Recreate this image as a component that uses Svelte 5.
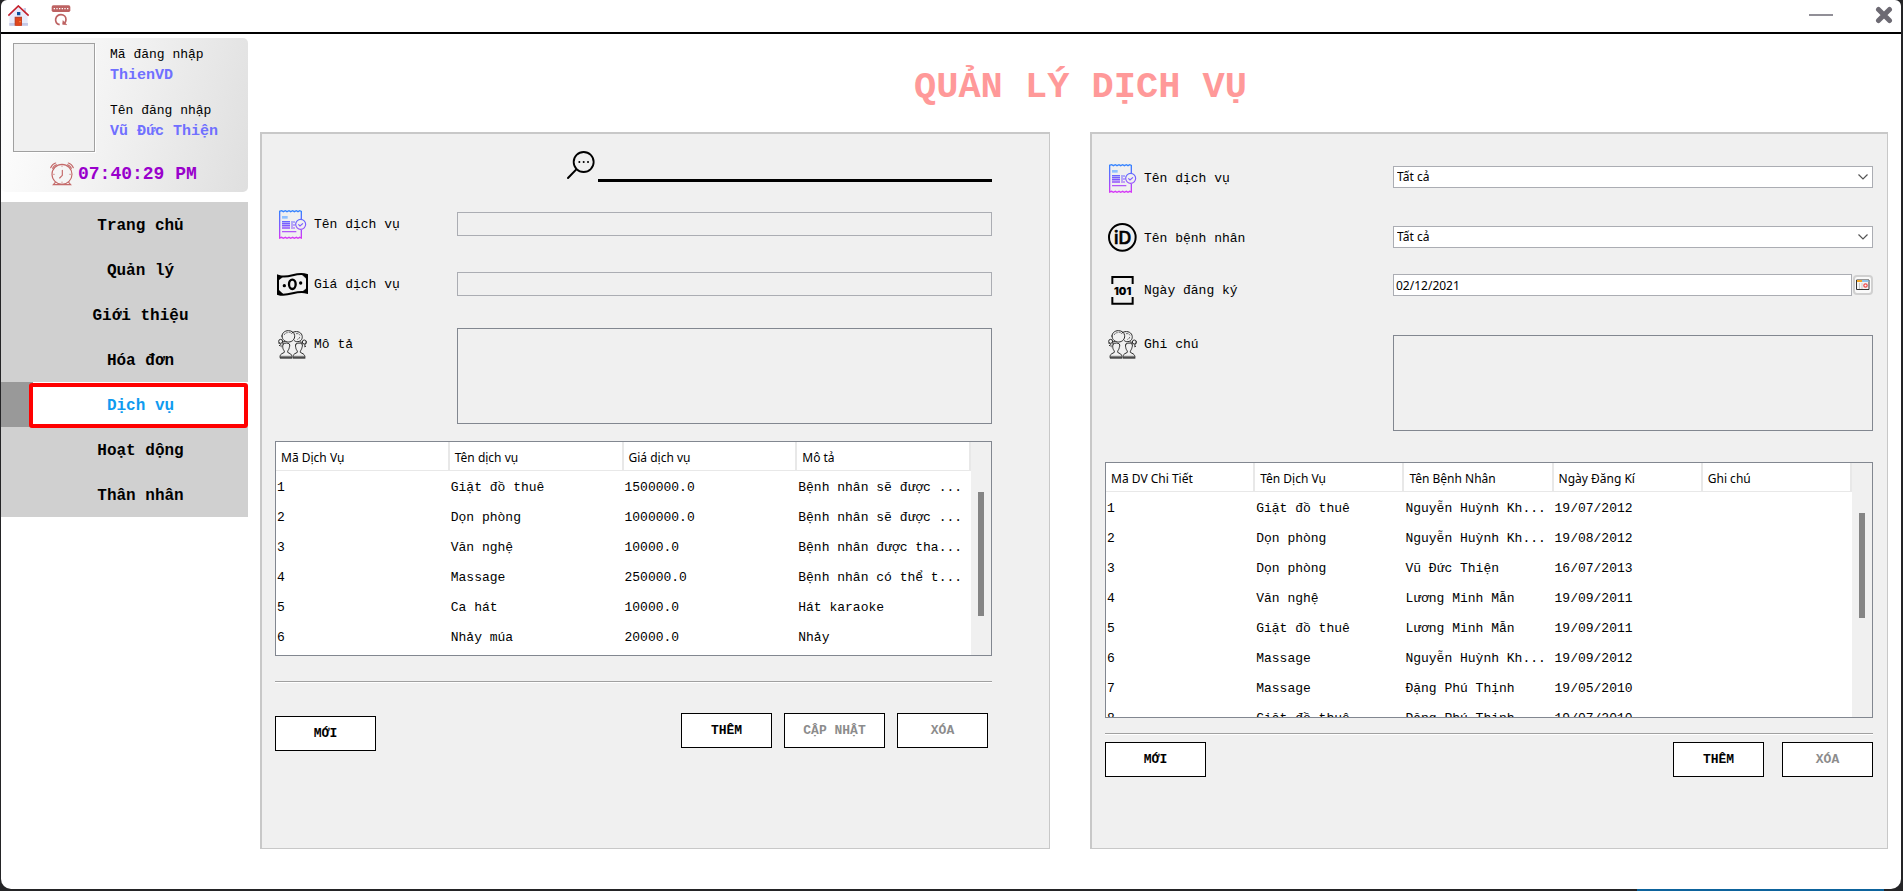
<script>
  const menu = ['Trang chủ', 'Quản lý', 'Giới thiệu', 'Hóa đơn', 'Dịch vụ', 'Hoạt dộng', 'Thân nhân'];
  let active = $state('Dịch vụ');

  const serviceHead = ['Mã Dịch Vụ', 'Tên dịch vụ', 'Giá dịch vụ', 'Mô tả'];
  const services = [
    ['1', 'Giặt đồ thuê', '1500000.0', 'Bệnh nhân sẽ được ...'],
    ['2', 'Dọn phòng', '1000000.0', 'Bệnh nhân sẽ được ...'],
    ['3', 'Văn nghệ', '10000.0', 'Bệnh nhân được tha...'],
    ['4', 'Massage', '250000.0', 'Bệnh nhân có thể t...'],
    ['5', 'Ca hát', '10000.0', 'Hát karaoke'],
    ['6', 'Nhảy múa', '20000.0', 'Nhảy'],
  ];

  const detailHead = ['Mã DV Chi Tiết', 'Tên Dịch Vụ', 'Tên Bệnh Nhân', 'Ngày Đăng Kí', 'Ghi chú'];
  const details = [
    ['1', 'Giặt đồ thuê', 'Nguyễn Huỳnh Kh...', '19/07/2012', ''],
    ['2', 'Dọn phòng', 'Nguyễn Huỳnh Kh...', '19/08/2012', ''],
    ['3', 'Dọn phòng', 'Vũ Đức Thiện', '16/07/2013', ''],
    ['4', 'Văn nghệ', 'Lương Minh Mẫn', '19/09/2011', ''],
    ['5', 'Giặt đồ thuê', 'Lương Minh Mẫn', '19/09/2011', ''],
    ['6', 'Massage', 'Nguyễn Huỳnh Kh...', '19/09/2012', ''],
    ['7', 'Massage', 'Đặng Phú Thịnh', '19/05/2010', ''],
    ['8', 'Giặt đồ thuê', 'Đặng Phú Thịnh', '19/07/2010', ''],
  ];
</script>

{#snippet receipt(id)}
  <svg class="icon" viewBox="0 0 96 96" fill="none" aria-hidden="true">
    <defs>
      <linearGradient {id} gradientUnits="userSpaceOnUse" x1="0" y1="6" x2="0" y2="93">
        <stop offset="0" stop-color="#2f86ff" />
        <stop offset="0.5" stop-color="#7a5cff" />
        <stop offset="1" stop-color="#dc35f5" />
      </linearGradient>
    </defs>
    <g stroke="url(#{id})" stroke-width="4">
      <path d="M76 33V10l-5-2-5 3-5-3-6 3-5-3-6 3-5-3-6 3-5-3-6 3-5-3-6 2v80l6-2 5 3 6-3 5 3 6-3 5 3 6-3 5 3 6-3 5 3 5-3 5 2V66" />
      <circle cx="74" cy="49" r="15" stroke-width="3.5" />
      <path d="M67 49l5 5 9-8" stroke-width="3.5" />
      <path d="M18 71h43" stroke-width="3.5" />
      <path d="M18 41h24M18 47h24M18 53h24M18 60h24" stroke-width="4.5" />
      <path d="M48 39v24M54 39v6M54 48v6M54 57v6" stroke-width="3" />
    </g>
    <path d="M18 24h17v8H18z" fill="#8fc0ff" />
  </svg>
{/snippet}

{#snippet people()}
  <svg class="icon" viewBox="0 0 96 96" fill="none" stroke="#2b2b2b" stroke-width="3" stroke-linecap="round" stroke-linejoin="round" aria-hidden="true">
    <path d="M49 14c10-7 26-3 29 8 3 10-3 18-12 19-5 1-9-1-12-4" />
    <path d="M18 24c0-9 8-16 19-16s18 6 19 15c1 10-7 19-18 19s-20-7-20-18z" />
    <path d="M25 20c2-4 5-6 9-6M39 13c3 0 6 1 8 4M61 17c5-1 9 1 11 5M71 28c-1 3-3 5-6 6" stroke-dasharray="4 4" stroke-width="2" />
    <circle cx="14" cy="40" r="6" /><circle cx="85" cy="42" r="6" />
    <path d="M8 45c4 0 6 3 7 7M20 46c-1-4 2-6 6-5M90 47c-4 1-5 4-3 7M79 46c0-3-3-5-6-4" />
    <path d="M10 52l6 4M86 56l6-2" stroke-dasharray="3 4" />
    <path d="M22 48c4-4 14-4 18 0 3 4 0 9-1 14-1 4-5 6-4 11l9 5c2 2 4 6 4 11H12c0-5 1-9 4-11l9-5c1-5-3-7-4-11-1-5-2-10 1-14z" />
    <path d="M60 48c4-4 14-4 18 0 3 4 0 9-1 14-1 4-5 6-4 11l9 5c3 2 5 6 5 11H51c0-5 1-9 4-11l9-5c1-5-3-7-4-11-1-5-3-10 0-14z" />
    <path d="M13 85h33M52 85h34M13 91h34M51 91h36" stroke-width="2.6" stroke="#555" />
  </svg>
{/snippet}

{#snippet chevron()}
  <svg class="chevron" viewBox="0 0 12 8" fill="none" aria-hidden="true"><path d="M1.500 1.500L6 6l4.500-4.500" stroke="#555" stroke-width="1.200" /></svg>
{/snippet}

{#snippet grid(label, head, rows, kind)}
  <div class="grid-box {kind}">
    <div class="viewport">
      <table aria-label={label}>
        <thead><tr>{#each head as h}<th scope="col">{h}</th>{/each}</tr></thead>
        <tbody>
          {#each rows as row}
            <tr>{#each row as cell}<td>{cell}</td>{/each}</tr>
          {/each}
        </tbody>
      </table>
    </div>
    <div class="track"><div class="thumb"></div></div>
  </div>
{/snippet}

<div class="window">
  <header class="topbar">
    <button class="tool" aria-label="Trang chủ">
      <svg width="21" height="21" viewBox="0 0 63 63" aria-hidden="true">
        <path d="M47 9h7v18h-7z" fill="#c9cdea" />
        <path d="M4 31L31 6l28 25v31H4z" fill="#e9ebfa" />
        <path d="M4 54h56v8H4z" fill="#c4c8e6" />
        <path d="M1 32L31 3l31 29" fill="none" stroke="#c5202c" stroke-width="5" />
        <path d="M27 21h10v10H27z" fill="#0d4f9c" />
        <path d="M20 35h22v27H20z" fill="#b9432c" />
        <path d="M23 38h17v24H23z" fill="#e0461c" />
        <circle cx="36" cy="50" r="2" fill="#ffb84d" />
      </svg>
    </button>
    <button class="tool" aria-label="Đổi mật khẩu">
      <svg width="20" height="21" viewBox="0 0 60 63" fill="none" aria-hidden="true">
        <rect x="2" y="1" width="56" height="20" rx="5" fill="#bd6262" />
        <path d="M8 11h44" stroke="#fff" stroke-width="4" stroke-dasharray="4 4" />
        <path d="M26 59C17 57 13 50 14 42c2-8 8-13 16-13 9 0 15 7 15 15 0 5-2 8-5 11" stroke="#bd6262" stroke-width="5" />
        <path d="M36 47l-1 11 12 1z" fill="#bd6262" stroke="#bd6262" stroke-width="2" />
      </svg>
    </button>
    <span class="spacer"></span>
    <button class="tool minimise" aria-label="Thu nhỏ">
      <svg width="24" height="18" viewBox="0 0 24 18" aria-hidden="true"><path d="M0 9h24" stroke="#918f97" stroke-width="2" /></svg>
    </button>
    <button class="tool" aria-label="Đóng">
      <svg width="18" height="18" viewBox="0 0 18 18" aria-hidden="true"><path d="M3.500 3.500l11 11M14.500 3.500l-11 11" stroke="#6d6a73" stroke-width="5" stroke-linecap="round" /></svg>
    </button>
  </header>

  <div class="body">
    <aside>
      <section class="user">
        <div class="identity">
          <div class="avatar"></div>
          <dl>
            <dt>Mã đăng nhập</dt><dd>ThienVD</dd>
            <dt>Tên đăng nhập</dt><dd>Vũ Đức Thiện</dd>
          </dl>
        </div>
        <div class="clock">
          <svg width="24" height="24" viewBox="0 0 72 72" fill="none" stroke="#c46a6a" stroke-width="3.500" stroke-linecap="round" aria-hidden="true">
            <circle cx="36" cy="37" r="30" />
            <path d="M37 25v15l-8 8M2 17C5 10 10 5 17 3M8 19c2-5 6-9 11-11M70 17C67 10 62 5 55 3M64 19c-2-5-6-9-11-11M16 61l-6 7h52l-6-7M25 68h22" />
            <path d="M36 11v3M36 60v3M10 37h3M59 37h3" stroke-width="2" />
          </svg>
          <time>07:40:29 PM</time>
        </div>
      </section>
      <nav>
        {#each menu as item}
          <button class:active={item === active} onclick={() => (active = item)}><span>{item}</span></button>
        {/each}
      </nav>
    </aside>

    <main>
      <h1>QUẢN LÝ DỊCH VỤ</h1>
      <div class="panels">
        <section class="panel services">
          <div class="search">
            <svg class="icon" viewBox="0 0 96 96" fill="none" stroke="#000" aria-hidden="true">
              <circle cx="56" cy="39" r="30" stroke-width="5.500" />
              <path d="M34 61L9 87" stroke-width="6" stroke-linecap="round" />
              <path d="M43 39h.1M56 39h.1M69 39h.1" stroke-width="6" stroke-linecap="round" />
            </svg>
            <input type="text" aria-label="Tìm kiếm" />
          </div>

          <div class="fields">
            <label for="sv-name">{@render receipt('receipt-a')}Tên dịch vụ</label>
            <input id="sv-name" type="text" />
            <label for="sv-price">
              <svg class="icon" viewBox="0 0 96 96" fill="none" stroke="#000" aria-hidden="true">
                <path d="M6 23c14 5 29 3 44-1s29-6 43-1v53c-14-4-28-2-43 2s-30 7-44 2z" stroke-width="6" />
                <path d="M6 23l15 3-15 12zM93 21L77 19l16 15zM6 78l16 1L6 64zM93 74l-15-2 15-12z" fill="#000" />
                <ellipse cx="49" cy="49" rx="10" ry="14" stroke-width="7" />
                <circle cx="25" cy="53" r="5" fill="#000" stroke="none" /><circle cx="74" cy="45" r="5" fill="#000" stroke="none" />
              </svg>Giá dịch vụ
            </label>
            <input id="sv-price" type="text" />
            <label for="sv-desc">{@render people()}Mô tả</label>
            <textarea id="sv-desc"></textarea>
          </div>

          {@render grid('Danh sách dịch vụ', serviceHead, services, 'short')}
          <hr />
          <div class="actions">
            <button class="wide low">MỚI</button>
            <span class="spacer"></span>
            <button>THÊM</button>
            <button class="wide" disabled>CẬP NHẬT</button>
            <button disabled>XÓA</button>
          </div>
        </section>

        <section class="panel details">
          <div class="fields">
            <label for="dt-service">{@render receipt('receipt-b')}Tên dịch vụ</label>
            <div class="select"><select id="dt-service"><option>Tất cả</option></select>{@render chevron()}</div>
            <label for="dt-patient">
              <svg class="icon" viewBox="0 0 96 96" aria-hidden="true">
                <circle cx="49" cy="46" r="40" fill="none" stroke="#000" stroke-width="6" />
                <text class="id-mark" x="50" y="65" text-anchor="middle">iD</text>
              </svg>Tên bệnh nhân
            </label>
            <div class="select"><select id="dt-patient"><option>Tất cả</option></select>{@render chevron()}</div>
            <label for="dt-date">
              <svg class="icon" viewBox="0 0 96 96" aria-hidden="true">
                <path d="M19 30V9h61v21M19 69v20h61V69" fill="none" stroke="#000" stroke-width="6" />
                <text class="num-mark" x="50" y="62" text-anchor="middle">101</text>
              </svg>Ngày đăng ký
            </label>
            <div class="date">
              <input id="dt-date" type="text" value="02/12/2021" />
              <button aria-label="Chọn ngày">
                <svg width="14" height="12" viewBox="0 0 14 12" aria-hidden="true">
                  <path d="M.5 1h12.500v9.500H.5z" fill="#f4f4f4" stroke="#333" />
                  <path d="M1 1h5v2H1z" fill="#f5a623" /><path d="M6 1h6.500v2H6z" fill="#8ec3ea" />
                  <path d="M3.500 4v6M6 4v6" stroke="#ccc" />
                  <circle cx="9.500" cy="6.500" r="1.700" fill="none" stroke="#ee4b4b" stroke-width="1.200" />
                </svg>
              </button>
            </div>
            <label for="dt-note">{@render people()}Ghi chú</label>
            <textarea id="dt-note"></textarea>
          </div>

          {@render grid('Chi tiết dịch vụ', detailHead, details, 'tall')}
          <hr />
          <div class="actions">
            <button class="wide">MỚI</button>
            <span class="spacer"></span>
            <button>THÊM</button>
            <button disabled>XÓA</button>
          </div>
        </section>
      </div>
    </main>
  </div>
</div>

<style>
  :global(body) {
    background:
      linear-gradient(90deg, transparent 86%, #0d639c 86% 99%, transparent 99%) bottom / 100% 2px no-repeat,
      #242426;
  }
  * { box-sizing: border-box; }
  button, input, select, textarea { font: inherit; color: inherit; margin: 0; }
  .window {
    display: flex;
    flex-direction: column;
    min-height: calc(100vh - 2px);
    margin: 0 2px 2px 1px;
    overflow: hidden;
    background: #fff;
    border-radius: 6px 6px 10px 10px;
    color: #000;
    font: 13px/18px 'Courier New', 'Liberation Mono', monospace;
  }
  .spacer { flex: 1; }

  .topbar {
    display: flex;
    align-items: center;
    gap: 20px;
    height: 34px;
    padding: 0 8px 2px 7px;
    border-bottom: 2px solid #000;
  }
  .tool { display: flex; padding: 0; border: 0; background: none; }
  .tool + .tool { margin-left: 2px; }
  .minimise { margin-right: 20px; }

  .body { display: flex; flex: 1; }
  aside { width: 247px; flex: none; padding-top: 4px; }
  .user {
    height: 154px;
    padding: 5px 12px;
    border-radius: 5px;
    background: linear-gradient(105deg, #fff, #f2f2f2 45%, #dfdfdf);
  }
  .identity { display: flex; gap: 15px; height: 110px; }
  .avatar {
    width: 82px;
    height: 109px;
    background: #f0f0f0;
    border: 1px solid #a0a0a0;
    box-shadow: 1px 1px #fff;
  }
  dl { margin: 2px 0 0; }
  dt { line-height: 20px; }
  dd { margin: 0 0 15px; font-size: 15px; font-weight: bold; line-height: 21px; color: #7070ff; }
  .clock { display: flex; align-items: center; gap: 4px; padding: 9px 0 0 37px; }
  .clock time { font-size: 18px; font-weight: bold; color: #9900cc; }

  nav { display: flex; flex-direction: column; margin-top: 10px; background: #d0d0d0; }
  nav button {
    height: 45px;
    padding: 2px 0 0 32px;
    border: 0;
    background: none;
    font-size: 16px;
    font-weight: bold;
  }
  nav .active { padding: 1px 0 0 28px; background: linear-gradient(90deg, #999 32px, #fff 32px); color: #0f9bf0; }
  nav .active span {
    display: block;
    padding: 1px 0 0 4px;
    border: 4px solid #f00;
    border-radius: 3px;
    background: #fff;
    line-height: 36px;
  }

  main { display: flex; flex: 1; flex-direction: column; padding: 0 0 40px 12px; min-width: 0; }
  h1 { margin: 0; padding: 29px 0 21px; font-size: 37px; line-height: 48px; text-align: center; color: #ff9999; }
  .panels {
    display: grid;
    flex: 1;
    grid-template-columns: minmax(0, 790fr) minmax(0, 798fr);
    gap: 40px;
    padding-right: 13px;
  }
  .panel {
    background: #f0f0f0;
    border: solid #c8c8c8;
    border-width: 2px 1px 1px 2px;
  }
  .services { padding: 15px 57px 0 13px; }
  .details { padding: 28px 14px 0 13px; }

  .icon { width: 32px; height: 32px; flex: none; }
  .id-mark { font: 500 53px Inter, sans-serif; stroke: #000; stroke-width: 2px; }
  .num-mark { font: 900 32px Inter, sans-serif; }
  .search { display: flex; justify-content: flex-end; margin-bottom: 26px; }
  .search input { width: 55%; height: 33px; margin-left: 1px; border: 0; border-bottom: 3px solid #000; background: none; }

  .fields { display: grid; align-items: start; }
  .services .fields { grid-template: 60px 60px 96px / 182px minmax(0, 1fr); }
  .details .fields { grid-template: 60px 52px 54px 103px / 288px minmax(0, 1fr); }
  label { display: flex; align-items: center; gap: 6px; height: 34px; padding-left: 1px; white-space: nowrap; }
  label .icon { align-self: flex-start; }
  .fields input { width: 100%; height: 24px; margin-top: 4px; padding: 0 4px; border: 1px solid #abadb3; border-radius: 0; background: #f0f0f0; }
  textarea { display: block; width: 100%; height: 96px; border: 1px solid #828790; border-radius: 0; background: #f0f0f0; resize: none; }
  .details textarea { margin-top: 7px; }

  .select { position: relative; margin-top: 4px; }
  select, .fields .date input, th { font: 12px/16px Tahoma, 'Noto Sans', sans-serif; }
  select {
    display: block;
    width: 100%;
    height: 22px;
    padding: 0 20px 0 3px;
    border: 1px solid #abadb3;
    border-radius: 0;
    background: #fff;
    appearance: none;
  }
  .chevron { position: absolute; right: 4px; top: 7px; width: 12px; height: 8px; pointer-events: none; }
  .date { display: flex; align-items: center; gap: 1px; }
  .fields .date input { height: 22px; margin: 0; padding: 0 2px; background: #fff; }
  .date button {
    display: flex;
    align-items: center;
    justify-content: center;
    flex: none;
    width: 20px;
    height: 20px;
    padding: 0;
    border: 2px solid #d0d0d0;
    border-radius: 4px;
    background: #fafafa;
  }

  .grid-box { display: flex; border: 1px solid #828790; background: #f0f0f0; }
  .short { height: 215px; margin-top: 17px; }
  .tall { height: 256px; margin-top: 31px; }
  .viewport { flex: 1; min-width: 0; overflow: hidden; background: #fff; }
  table { width: 100%; table-layout: fixed; border-collapse: separate; border-spacing: 0; }
  th, td { overflow: hidden; text-align: left; white-space: nowrap; }
  th { height: 29px; padding: 3px 0 0 5px; border: solid #e8e8e8; border-width: 0 2px 1px 0; }
  td { height: 30px; padding: 3px 0 0 1px; }
  .track { display: flex; justify-content: center; flex: none; width: 20px; padding-top: 50px; }
  .thumb { width: 6px; height: 124px; background: #858585; }
  .tall .thumb { height: 105px; }

  hr { height: 2px; margin: 25px 0 30px; border: solid; border-width: 1px 0; border-color: #a0a0a0 transparent #fff; }
  .details hr { margin: 15px 0 7px; }
  .actions { display: flex; gap: 12px; }
  .services .actions { padding-right: 4px; }
  .details .actions { gap: 18px; }
  .actions button {
    width: 91px;
    height: 35px;
    padding: 1px 0 0;
    border: 1px solid #000;
    background: #fff;
    font-weight: bold;
  }
  .actions .wide { width: 101px; }
  .actions .low { margin-top: 3px; }
  .actions button:disabled { color: #8c8c8c; }
</style>
